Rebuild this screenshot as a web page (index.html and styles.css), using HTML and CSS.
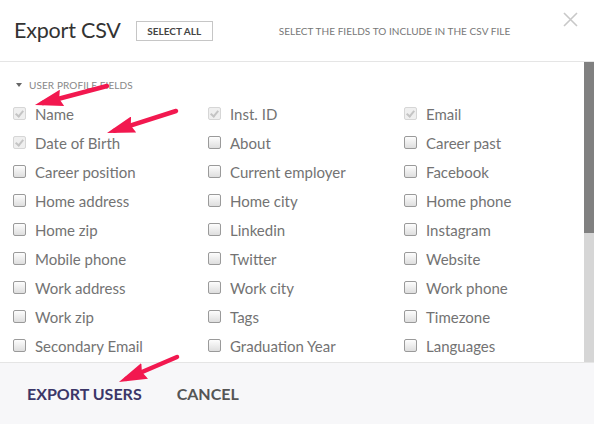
FILE: index.html
```html
<!DOCTYPE html>
<html>
<head>
<meta charset="utf-8">
<link rel="stylesheet" href="styles.css">
</head>
<body>
<div class="modal">
  <header class="modal-header">
    <h1 class="title">Export CSV</h1>
    <button class="select-all">SELECT ALL</button>
    <span class="hint">SELECT THE FIELDS TO INCLUDE IN THE CSV FILE</span>
    <span class="close">
      <svg width="15" height="15" viewBox="0 0 15 15"><path d="M1 1L14 14M14 1L1 14" stroke="#c8c8c8" stroke-width="1.6" fill="none"/></svg>
    </span>
  </header>
  <div class="modal-body">
    <div class="scroll-area">
      <div class="section">
        <div class="section-title"><span class="caret"></span>USER PROFILE FIELDS</div>
        <div class="fields">
          <label class="field"><span class="cb checked"></span>Name</label>
          <label class="field"><span class="cb checked"></span>Inst. ID</label>
          <label class="field"><span class="cb checked"></span>Email</label>
          <label class="field"><span class="cb checked"></span>Date of Birth</label>
          <label class="field"><span class="cb"></span>About</label>
          <label class="field"><span class="cb"></span>Career past</label>
          <label class="field"><span class="cb"></span>Career position</label>
          <label class="field"><span class="cb"></span>Current employer</label>
          <label class="field"><span class="cb"></span>Facebook</label>
          <label class="field"><span class="cb"></span>Home address</label>
          <label class="field"><span class="cb"></span>Home city</label>
          <label class="field"><span class="cb"></span>Home phone</label>
          <label class="field"><span class="cb"></span>Home zip</label>
          <label class="field"><span class="cb"></span>Linkedin</label>
          <label class="field"><span class="cb"></span>Instagram</label>
          <label class="field"><span class="cb"></span>Mobile phone</label>
          <label class="field"><span class="cb"></span>Twitter</label>
          <label class="field"><span class="cb"></span>Website</label>
          <label class="field"><span class="cb"></span>Work address</label>
          <label class="field"><span class="cb"></span>Work city</label>
          <label class="field"><span class="cb"></span>Work phone</label>
          <label class="field"><span class="cb"></span>Work zip</label>
          <label class="field"><span class="cb"></span>Tags</label>
          <label class="field"><span class="cb"></span>Timezone</label>
          <label class="field"><span class="cb"></span>Secondary Email</label>
          <label class="field"><span class="cb"></span>Graduation Year</label>
          <label class="field"><span class="cb"></span>Languages</label>
        </div>
      </div>
    </div>
    <div class="scrollbar"><div class="thumb"></div></div>
  </div>
  <footer class="modal-footer">
    <button class="btn primary">EXPORT USERS</button>
    <button class="btn">CANCEL</button>
  </footer>
  <svg class="arrows" width="594" height="424" viewBox="0 0 594 424">
    <defs>
      <marker id="ah" viewBox="0 0 28 17" refX="20" refY="8.5" markerWidth="28" markerHeight="17" markerUnits="userSpaceOnUse" orient="auto">
        <path d="M0 0L28 8.5L0 17L3 8.5z" fill="#f2184f"/>
      </marker>
    </defs>
    <g stroke="#f2184f" stroke-width="4.5" fill="none" stroke-linecap="round">
      <line x1="107" y1="86" x2="42.7" y2="103" marker-end="url(#ah)"/>
      <line x1="176" y1="111" x2="114.6" y2="130.6" marker-end="url(#ah)"/>
      <line x1="177" y1="357" x2="126.3" y2="378.8" marker-end="url(#ah)"/>
    </g>
  </svg>
</div>
</body>
</html>
```
FILE: styles.css
```css
html, body {
  margin: 0;
  padding: 0;
  background: #fff;
}
body {
  width: 594px;
  height: 424px;
  overflow: hidden;
  font-family: Lato, "Liberation Sans", sans-serif;
}
.modal {
  position: relative;
  width: 594px;
  height: 424px;
  display: flex;
  flex-direction: column;
}
.modal-header {
  height: 61px;
  border-bottom: 1px solid #e5e5e5;
  display: flex;
  align-items: center;
  padding: 0 16px 0 14px;
  box-sizing: content-box;
}
.title {
  margin: 0 0 1px 0;
  font-size: 21.5px;
  font-weight: 400;
  color: #333;
  letter-spacing: -0.2px;
}
.select-all {
  margin-left: 15px;
  height: 20px;
  width: 77px;
  padding: 0;
  border: 1px solid #c6c6c6;
  background: #fff;
  font-family: inherit;
  font-size: 10px;
  font-weight: 700;
  color: #444;
}
.hint {
  margin-left: 66px;
  font-size: 10px;
  color: #777;
  letter-spacing: 0.05px;
}
.close {
  margin-left: auto;
  align-self: flex-start;
  margin-top: 12px;
  display: flex;
}
.modal-body {
  height: 300px;
  display: flex;
  overflow: hidden;
}
.scroll-area {
  flex: 1;
  overflow: hidden;
}
.scrollbar {
  width: 10px;
  background: #d6d6d6;
  flex: none;
}
.thumb {
  height: 171px;
  background: #808080;
}
.section {
  padding: 16px 0 0 13px;
}
.section-title {
  display: flex;
  align-items: center;
  height: 14px;
  font-size: 10px;
  color: #888;
  letter-spacing: 0.1px;
}
.caret {
  width: 0;
  height: 0;
  border-left: 3.5px solid transparent;
  border-right: 3.5px solid transparent;
  border-top: 4px solid #666;
  margin: 0 7px 0 3px;
}
.fields {
  margin-top: 7px;
  display: grid;
  grid-template-columns: 195px 196px 170px;
}
.field {
  height: 29px;
  display: flex;
  align-items: center;
  font-size: 15px;
  color: #737373;
}
.cb {
  width: 11px;
  height: 11px;
  border: 1px solid #9a9a9a;
  border-radius: 2px;
  background: linear-gradient(#fdfdfd, #dedede);
  margin-right: 9px;
  flex: none;
  position: relative;
}
.cb.checked {
  border-color: #d6d6d6;
  background: #efefef;
}
.cb.checked::after {
  content: "";
  position: absolute;
  left: 3px;
  top: 1px;
  width: 3px;
  height: 6px;
  border-right: 2px solid #c4c4c4;
  border-bottom: 2px solid #c4c4c4;
  transform: rotate(40deg);
}
.modal-footer {
  flex: 1;
  background: #f7f7f9;
  border-top: 1px solid #e5e5e5;
  display: flex;
  align-items: center;
  padding-left: 27px;
  gap: 35px;
}
.btn {
  border: none;
  background: none;
  padding: 0;
  font-family: inherit;
  font-size: 16px;
  font-weight: 700;
  color: #555;
}
.btn.primary {
  color: #3b3668;
}
.arrows {
  position: absolute;
  left: 0;
  top: 0;
  pointer-events: none;
}
```
